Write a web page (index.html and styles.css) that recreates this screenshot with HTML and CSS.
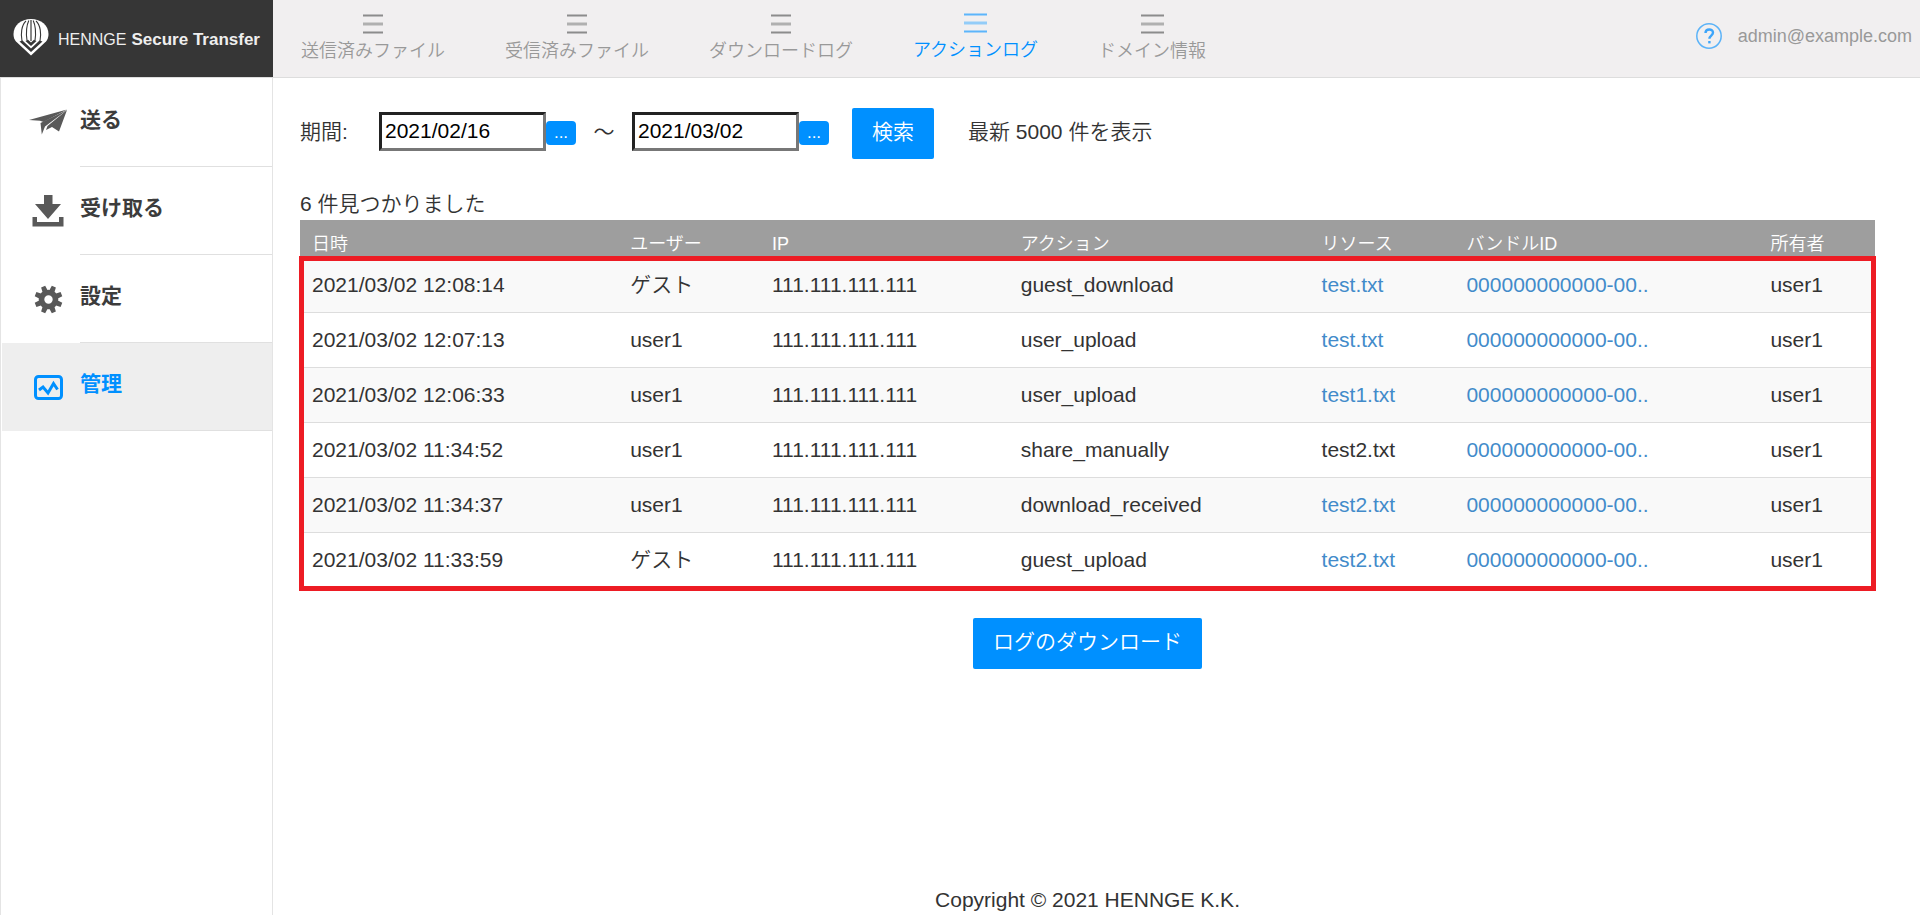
FILE: index.html
```html
<!DOCTYPE html>
<html lang="ja">
<head>
<meta charset="utf-8">
<title>HENNGE Secure Transfer</title>
<link rel="stylesheet" href="styles.css">
</head>
<body>
<div class="app">
  <a class="brand" href="#">
    <svg class="brand-mark" viewBox="0 0 36 37" aria-hidden="true">
      <path d="M18 0C8 0 .5 6.500.5 15c0 3 .9 5.500 2.500 7.500L18 36.500l15-14c1.600-2 2.500-4.500 2.500-7.500C35.500 6.500 28 0 18 0z" fill="#fff"/>
      <path d="M6.500 22.500 18 33l11.500-10.500-3-1L18 29.500l-8.500-8z" fill="#363636"/>
      <path d="M12.500 22 18 27l5.500-5-2.500-1.200-3 2.700-3-2.700z" fill="#363636"/>
      <path d="M13 2C8.500 6 7.500 15 9 22M15.800 1.500c-2.300 5-2.800 13-1.800 20M20.200 1.500c2.300 5 2.800 13 1.800 20M23 2c4.500 4 5.500 13 4 20" fill="none" stroke="#363636" stroke-width="1.100"/>
      <path d="M18 1v21" stroke="#888" stroke-width="2"/>
    </svg>
    <span class="brand-name">HENNGE</span>
    <span class="brand-product">Secure Transfer</span>
  </a>

  <header class="topbar">
    <nav class="tabs">
      <a class="tab" href="#"><svg class="bars" viewBox="0 0 20 20" preserveAspectRatio="none"><path class="edge" d="M0 1.500h20M0 18.500h20"/><path class="mid" d="M0 10h20"/></svg>送信済みファイル</a>
      <a class="tab" href="#"><svg class="bars" viewBox="0 0 20 20" preserveAspectRatio="none"><path class="edge" d="M0 1.500h20M0 18.500h20"/><path class="mid" d="M0 10h20"/></svg>受信済みファイル</a>
      <a class="tab" href="#"><svg class="bars" viewBox="0 0 20 20" preserveAspectRatio="none"><path class="edge" d="M0 1.500h20M0 18.500h20"/><path class="mid" d="M0 10h20"/></svg>ダウンロードログ</a>
      <a class="tab tab-active" href="#"><svg class="bars bars-wide" viewBox="0 0 20 20" preserveAspectRatio="none"><path class="edge" d="M0 1.500h20M0 18.500h20"/><path class="mid" d="M0 10h20"/></svg>アクションログ</a>
      <a class="tab" href="#"><svg class="bars bars-wide" viewBox="0 0 20 20" preserveAspectRatio="none"><path class="edge" d="M0 1.500h20M0 18.500h20"/><path class="mid" d="M0 10h20"/></svg>ドメイン情報</a>
    </nav>
    <div class="account">
      <a class="help" href="#" aria-label="ヘルプ">
        <svg class="help-icon" viewBox="0 0 26 26"><circle cx="13" cy="13" r="12.200" fill="none" stroke="#5cb3f8" stroke-width="1.500"/><path d="M9.500 10c0-4.800 7.500-4.500 7.500-.4 0 3-3.600 3-3.600 6.200" fill="none" stroke="#3da5fa" stroke-width="2.400"/><path d="M12.200 18h2.400v2.400h-2.400z" fill="#3da5fa"/></svg>
      </a>
      <span>admin@example.com</span>
    </div>
  </header>

  <aside class="sidebar">
    <a class="side-item" href="#">
      <span class="side-icon"><svg width="40" height="28" viewBox="0 0 40 28" fill="#595959"><path d="M1 11 39 .500 15.500 13 12 11.800z"/><path d="M12.500 14 39 1 17 17.500 13.800 25.500z"/><path d="M39 1 31 22.500 24 18 18 21 19.500 17z"/></svg></span>
      <span class="side-label">送る</span>
    </a>
    <a class="side-item" href="#">
      <span class="side-icon"><svg width="32" height="32" viewBox="0 0 32 32" fill="#595959"><path d="M12 0h8.500v9H29L16 24 3 9h9z"/><path d="M.500 22H5v5h22v-5h4.500v9.500H.500z"/></svg></span>
      <span class="side-label">受け取る</span>
    </a>
    <a class="side-item" href="#">
      <span class="side-icon"><svg width="29" height="29" viewBox="-14.500 -14.500 29 29"><circle r="7" fill="none" stroke="#595959" stroke-width="5.600"/><g fill="#595959"><g id="teeth"><path d="M-2.700-8.500-2.200-14h4.400l.5 5.500zM-2.700 8.500l.5 5.500h4.400l.5-5.500z" transform="rotate(22.500)"/><path d="M-2.700-8.500-2.200-14h4.400l.5 5.500zM-2.700 8.500l.5 5.500h4.400l.5-5.500z" transform="rotate(67.500)"/></g><use href="#teeth" transform="rotate(90)"/></g></svg></span>
      <span class="side-label">設定</span>
    </a>
    <a class="side-item side-item-active" href="#">
      <span class="side-icon"><svg width="29" height="25" viewBox="0 0 29 25" fill="none" stroke="#0090ff"><rect x="1.500" y="1.500" width="26" height="22" rx="3" stroke-width="3"/><path d="m5 15 4-3 5 6 5.500-9.500 4 6" stroke-width="3"/></svg></span>
      <span class="side-label">管理</span>
    </a>
  </aside>

  <main class="content">
    <form class="filter">
      <label class="filter-label" for="from">期間:</label>
      <input class="date" id="from" type="text" value="2021/02/16">
      <button class="picker" type="button" aria-label="開始日を選択">...</button>
      <span class="tilde">～</span>
      <input class="date" id="to" type="text" value="2021/03/02" aria-label="終了日">
      <button class="picker" type="button" aria-label="終了日を選択">...</button>
      <button class="btn search" type="button">検索</button>
      <span>最新 5000 件を表示</span>
    </form>

    <p class="count">6 件見つかりました</p>

    <div class="log">
      <table class="log-table">
        <colgroup><col class="c-time"><col class="c-user"><col class="c-ip"><col class="c-action"><col class="c-resource"><col class="c-bundle"><col class="c-owner"></colgroup>
        <thead>
          <tr><th>日時</th><th>ユーザー</th><th>IP</th><th>アクション</th><th>リソース</th><th>バンドルID</th><th>所有者</th></tr>
        </thead>
        <tbody>
          <tr><td>2021/03/02 12:08:14</td><td>ゲスト</td><td>111.111.111.111</td><td>guest_download</td><td><a href="#">test.txt</a></td><td><a href="#">000000000000-00..</a></td><td>user1</td></tr>
          <tr><td>2021/03/02 12:07:13</td><td>user1</td><td>111.111.111.111</td><td>user_upload</td><td><a href="#">test.txt</a></td><td><a href="#">000000000000-00..</a></td><td>user1</td></tr>
          <tr><td>2021/03/02 12:06:33</td><td>user1</td><td>111.111.111.111</td><td>user_upload</td><td><a href="#">test1.txt</a></td><td><a href="#">000000000000-00..</a></td><td>user1</td></tr>
          <tr><td>2021/03/02 11:34:52</td><td>user1</td><td>111.111.111.111</td><td>share_manually</td><td>test2.txt</td><td><a href="#">000000000000-00..</a></td><td>user1</td></tr>
          <tr><td>2021/03/02 11:34:37</td><td>user1</td><td>111.111.111.111</td><td>download_received</td><td><a href="#">test2.txt</a></td><td><a href="#">000000000000-00..</a></td><td>user1</td></tr>
          <tr><td>2021/03/02 11:33:59</td><td>ゲスト</td><td>111.111.111.111</td><td>guest_upload</td><td><a href="#">test2.txt</a></td><td><a href="#">000000000000-00..</a></td><td>user1</td></tr>
        </tbody>
      </table>
      <div class="highlight"></div>
    </div>

    <button class="btn download" type="button">ログのダウンロード</button>

    <footer class="footer">Copyright © 2021 HENNGE K.K.</footer>
  </main>
</div>
</body>
</html>
```
FILE: styles.css
```css
* {
  box-sizing: border-box;
}

body {
  margin: 0;
  color: #333;
  background: #fff;
  font-family: "Liberation Sans", "Noto Sans CJK JP", sans-serif;
  font-size: 21px;
  font-weight: 350;
  line-height: 30px;
}

a {
  color: #428bca;
  text-decoration: none;
}

button,
input {
  font: inherit;
}

.app {
  display: grid;
  grid-template-columns: 273px 1fr;
  grid-template-rows: auto 1fr;
  min-height: 100vh;
}

/* Brand */
.brand {
  display: flex;
  align-items: center;
  height: 78px;
  padding: 0 13px 2px;
  color: #eee;
  background: #363636;
  border-bottom: 1px solid #ddd;
  line-height: 24px;
  white-space: nowrap;
}

.brand-mark {
  width: 36px;
  height: 37px;
  margin-right: 9px;
}

.brand-name {
  margin-right: 5px;
  padding-top: 5px;
  font-size: 16px;
}

.brand-product {
  padding-top: 5px;
  font-size: 17px;
  font-weight: bold;
}

/* Top bar */
.topbar {
  display: flex;
  justify-content: space-between;
  padding: 0 8px 0 28px;
  color: #999;
  background: #f1eff0;
  border-bottom: 1px solid #ddd;
  font-size: 18px;
  line-height: 24px;
}

.tabs {
  display: flex;
  gap: 60px;
}

.tab {
  display: flex;
  flex-direction: column;
  align-items: center;
  gap: 5px;
  padding-top: 14px;
  color: #999;
  white-space: nowrap;
}

.tab-active {
  padding-top: 13px;
  color: #0090ff;
}

.bars {
  width: 20px;
  height: 20px;
  fill: none;
  stroke: #8c8c8c;
}

.bars-wide {
  width: 23px;
}

.bars .edge {
  stroke-width: 2;
}

.bars .mid {
  stroke: #b0b0b0;
  stroke-width: 3;
}

.tab-active .edge {
  stroke: #5cb5fb;
}

.tab-active .mid {
  stroke: #93ccf8;
}

.account {
  display: flex;
  align-items: center;
  gap: 16px;
  padding-bottom: 6px;
}

.help,
.help-icon {
  display: block;
  width: 26px;
  height: 26px;
}

/* Sidebar */
.sidebar {
  padding: 1px 0 0 1px;
  border: solid #e4e4e4;
  border-width: 0 1px;
}

.side-item {
  display: flex;
  height: 88px;
  color: #3c3c3c;
  font-weight: bold;
}

.side-icon {
  display: flex;
  align-items: center;
  justify-content: center;
  width: 78px;
  padding-left: 14px;
}

.side-label {
  flex: 1;
  padding-top: 26px;
  border-bottom: 1px solid #e0e0e0;
}

.side-item-active {
  color: #0090ff;
  background: #eee;
}

/* Content */
.content {
  display: flex;
  flex-direction: column;
  padding: 30px 45px 0 27px;
}

.filter {
  display: flex;
  align-items: center;
  height: 51px;
  padding-bottom: 4px;
  white-space: nowrap;
}

.filter-label {
  width: 79px;
}

.date {
  width: 167px;
  height: 39px;
  padding: 0 3px 2px;
  color: #000;
  background: #fff;
  border: 3px solid;
  border-color: #222 #777 #777 #222;
  border-radius: 0;
}

.picker {
  width: 30px;
  height: 24px;
  margin-top: 3px;
  padding: 0;
  color: #fff;
  background: #0090ff;
  border: 0;
  border-radius: 4px;
  font-size: 17px;
  line-height: 24px;
}

.tilde {
  width: 56px;
  text-align: center;
}

.btn {
  height: 51px;
  padding: 0 20px 4px;
  color: #fff;
  background: #0090ff;
  border: 0;
  border-radius: 2px;
  white-space: nowrap;
}

.search {
  align-self: flex-start;
  margin: 0 34px 0 23px;
}

.count {
  margin: 30px 0 1px;
}

.log {
  position: relative;
}

.log-table {
  width: 100%;
  table-layout: fixed;
  border-collapse: collapse;
}

.c-time { width: 20.2%; }
.c-user { width: 9%; }
.c-ip { width: 15.8%; }
.c-action { width: 19.1%; }
.c-resource { width: 9.2%; }
.c-bundle { width: 19.3%; }
.c-owner { width: 7.4%; }

.log-table th {
  padding: 12px 0 1px 12px;
  color: #fff;
  background: #9e9e9e;
  font-size: 18px;
  font-weight: 350;
  line-height: 25px;
  text-align: left;
}

.log-table td {
  padding: 12px 0 12px 12px;
  border-bottom: 1px solid #ddd;
  white-space: nowrap;
}

.log-table tbody tr:nth-child(odd) {
  background: #f9f9f9;
}

/* Red frame drawn over the result rows */
.highlight {
  position: absolute;
  inset: 36px -1px -3px;
  border: 5px solid #ed1c24;
  pointer-events: none;
}

.download {
  align-self: center;
  margin-top: 30px;
}

.footer {
  margin-top: auto;
  text-align: center;
}
```
